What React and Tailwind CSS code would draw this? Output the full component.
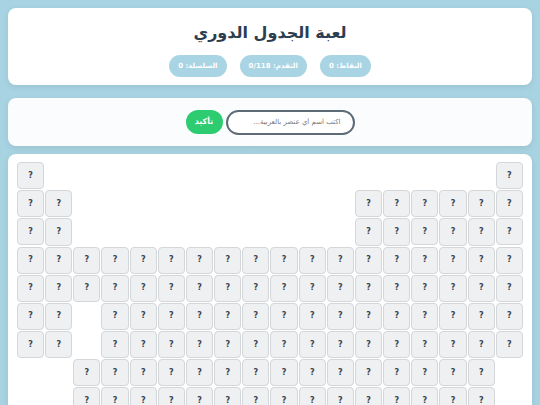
import React from "react";

const font = { fontFamily: '"DejaVu Sans", "Noto Sans", sans-serif' };

const range = (a, b) => Array.from({ length: b - a + 1 }, (_, i) => a + i);

// which of the 18 columns hold a cell, per row
const ROWS = [
  [1, 18],
  [1, 2, ...range(13, 18)],
  [1, 2, ...range(13, 18)],
  range(1, 18),
  range(1, 18),
  [1, 2, ...range(4, 18)],
  [1, 2, ...range(4, 18)],
  range(3, 17),
  range(3, 17)
];

function Cell() {
  return (
    <div className="aspect-square flex items-center justify-center rounded-[4px] border border-[#d3d7da] bg-[#eef0f1] text-[8px] font-bold text-[#3a4450]">
      ?
    </div>
  );
}

function Pill({ children }) {
  return (
    <div className="h-[22px] flex items-center rounded-full bg-[#a9d4e3] px-[9px] text-[7px] font-bold text-white">
      {children}
    </div>
  );
}

export default function App() {
  return (
    <div dir="rtl" style={font} className="min-h-[405px] w-[540px] overflow-hidden bg-gradient-to-b from-[#a8d3e2] to-[#a7d2df] px-2 pt-2">
      {/* header */}
      <div className="h-[77px] rounded-lg bg-white pt-[13px] shadow-[0_2px_6px_rgba(0,0,0,0.08)] flex flex-col items-center">
        <h1 className="text-[16px] leading-[24px] font-bold text-[#2c3e50]">لعبة الجدول الدوري</h1>
        <div className="mt-[10px] flex gap-[13px]">
          <Pill>النقاط: 0</Pill>
          <Pill>التقدم: 0/118</Pill>
          <Pill>السلسلة: 0</Pill>
        </div>
      </div>

      {/* input */}
      <div className="mt-[13px] h-[48px] rounded-lg bg-[#fbfcfe] shadow-[0_2px_6px_rgba(0,0,0,0.08)] flex items-center justify-center gap-[3px]">
        <input
          className="h-[25px] w-[129px] rounded-full border-2 border-[#5d6b78] bg-white px-3 text-[7px] text-[#555] outline-none placeholder:text-[#777]"
          placeholder="اكتب اسم أي عنصر بالعربية..."
        />
        <button className="h-[24px] w-[37px] rounded-full bg-[#2ecc71] text-[8px] font-bold text-white">تأكيد</button>
      </div>

      {/* table */}
      <div className="mt-[8px] rounded-t-lg bg-white px-[9px] pt-2 pb-2 shadow-[0_2px_6px_rgba(0,0,0,0.08)]">
        <div dir="ltr" className="grid grid-cols-[repeat(18,minmax(0,1fr))] gap-px">
          {ROWS.map((cols, r) =>
            range(1, 18).map(c =>
              cols.includes(c) ? <Cell key={r + "-" + c} /> : <div key={r + "-" + c} />
            )
          )}
        </div>
      </div>
    </div>
  );
}
